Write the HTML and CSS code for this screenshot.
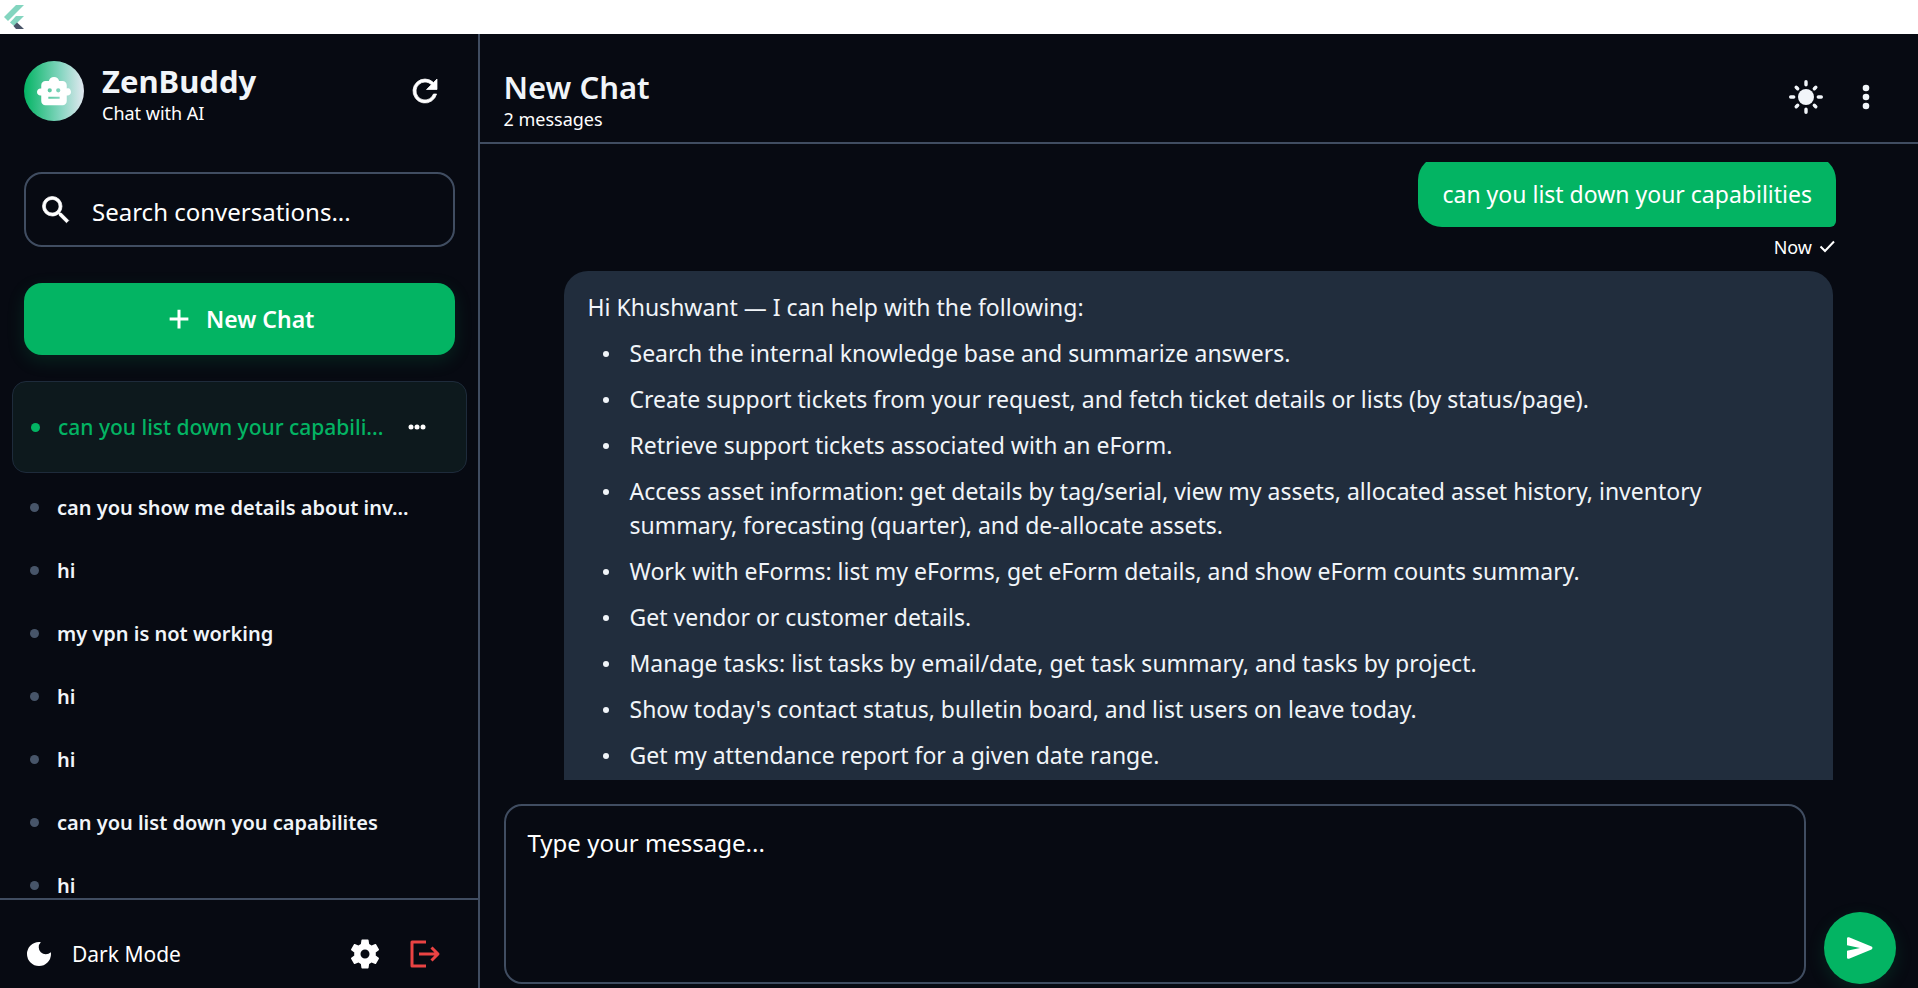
FILE: index.html
```
<!DOCTYPE html>
<html lang="en">
<head>
  <meta charset="UTF-8">
  <title>ZenBuddy</title>
  <link rel="stylesheet" href="styles.css">
</head>
<body>

  <div class="title-bar">
    <svg class="flutter-logo" viewBox="0 0 20 24">
      <path fill="#83d5bf" d="M12 0h8L4 16 0 12z"/>
      <path fill="#83d5bf" d="M12 11h8l-7 7-3 3-4-3.500z"/>
      <path fill="#4a5568" d="M9.500 21l3.500-3.500L20 24h-8z"/>
    </svg>
  </div>

  <div class="app">

    <aside class="sidebar">
      <div class="brand">
        <div class="avatar">
          <svg viewBox="0 1 24 24"><path fill="#fff" fill-rule="evenodd" d="M22 11c-.3 0-.7 0-1 .2V9c0-1.700-1.300-3-3-3h-2.400a3.700 3.700 0 0 0-7.200 0H6C4.300 6 3 7.300 3 9v2.200C1.400 10.900 0 12 0 13.700s1.400 2.800 3 2.500V20c0 1.700 1.300 3 3 3h12c1.700 0 3-1.300 3-3v-3.800c1.600.3 3-.8 3-2.500 0-1.400-.8-2.700-2-2.700zM7.500 12.500a1.500 1.500 0 1 1 3 0 1.500 1.500 0 0 1-3 0zm6 0a1.500 1.500 0 1 1 3 0 1.500 1.500 0 0 1-3 0zM8 17h8v1.500H8z"/></svg>
        </div>
        <div class="brand-text">
          <h1>ZenBuddy</h1>
          <p>Chat with AI</p>
        </div>
        <button class="icon-btn" aria-label="Refresh">
          <svg width="36" height="36" viewBox="0 0 24 24"><path fill="#fff" stroke="#fff" stroke-width=".5" d="M17.650 6.350A7.960 7.960 0 0 0 12 4a8 8 0 1 0 7.730 10h-2.080A6 6 0 1 1 12 6c1.660 0 3.140.69 4.220 1.780L13 11h7V4z"/></svg>
        </button>
      </div>

      <div class="search-box">
        <svg width="36" height="36" viewBox="0 0 24 24"><path fill="#fff" stroke="#fff" stroke-width=".5" d="M15.500 14h-.79l-.28-.27A6.471 6.471 0 0 0 16 9.500 6.500 6.500 0 1 0 9.500 16c1.610 0 3.090-.59 4.230-1.570l.27.28v.79l5 4.990L20.490 19l-4.990-5zm-6 0C7.010 14 5 11.990 5 9.500S7.010 5 9.500 5 14 7.010 14 9.500 11.990 14 9.500 14z"/></svg>
        <input type="text" id="searchInput" aria-label="Search conversations" placeholder="Search conversations...">
      </div>

      <button class="new-chat-btn">
        <svg width="30" height="30" viewBox="0 0 24 24"><path fill="#fff" d="M19.500 13.200h-6.300v6.300h-2.400v-6.300H4.500v-2.400h6.300V4.500h2.400v6.300h6.300z"/></svg>
        New Chat
      </button>

      <ul class="chat-list">
        <li class="chat-item active">
          <span class="dot"></span>
          <a href="#">can you list down your capabili...</a>
          <button class="more-btn" aria-label="Chat options">
            <svg width="18" height="6" viewBox="0 0 18 6" fill="#fff"><circle cx="3" cy="3" r="2.500"/><circle cx="9" cy="3" r="2.500"/><circle cx="15" cy="3" r="2.500"/></svg>
          </button>
        </li>
        <li class="chat-item"><span class="dot"></span><a href="#">can you show me details about inv...</a></li>
        <li class="chat-item"><span class="dot"></span><a href="#">hi</a></li>
        <li class="chat-item"><span class="dot"></span><a href="#">my vpn is not working</a></li>
        <li class="chat-item"><span class="dot"></span><a href="#">hi</a></li>
        <li class="chat-item"><span class="dot"></span><a href="#">hi</a></li>
        <li class="chat-item"><span class="dot"></span><a href="#">can you list down you capabilites</a></li>
        <li class="chat-item"><span class="dot"></span><a href="#">hi</a></li>
      </ul>

      <div class="sidebar-footer">
        <button class="mode-btn">
          <svg width="30" height="30" viewBox="0 0 30 30"><path fill="#fff" d="M15 3a12 12 0 1 0 12 12c0-.8-.1-1.300-.2-1.800a6.700 6.700 0 0 1-10-10C16.300 3.100 15.600 3 15 3z"/></svg>
          Dark Mode
        </button>
        <button class="icon-btn" aria-label="Settings">
          <svg width="36" height="36" viewBox="0 0 24 24"><path fill="#fff" d="M19.140 12.940c.04-.3.060-.61.060-.94 0-.32-.02-.64-.07-.94l2.030-1.580a.49.49 0 0 0 .12-.61l-1.920-3.320a.488.488 0 0 0-.59-.22l-2.390.96c-.5-.38-1.030-.7-1.620-.94l-.36-2.540a.484.484 0 0 0-.48-.41h-3.840c-.24 0-.43.17-.47.41l-.36 2.540c-.59.24-1.130.57-1.620.94l-2.390-.96c-.22-.08-.47 0-.59.22L2.740 8.870c-.12.21-.08.47.12.61l2.030 1.580c-.05.3-.09.63-.09.94s.02.64.07.94l-2.030 1.580a.49.49 0 0 0-.12.61l1.920 3.320c.12.22.37.29.59.22l2.390-.96c.5.38 1.030.7 1.620.94l.36 2.540c.05.24.24.41.48.41h3.840c.24 0 .44-.17.47-.41l.36-2.540c.59-.24 1.130-.56 1.620-.94l2.390.96c.22.08.47 0 .59-.22l1.920-3.320c.12-.22.07-.47-.12-.61zM12 15a3 3 0 1 1 0-6 3 3 0 0 1 0 6z"/></svg>
        </button>
        <button class="icon-btn" aria-label="Log out">
          <svg width="36" height="36" viewBox="0 0 36 36" fill="none" stroke="#ea4343" stroke-width="3" stroke-linejoin="round"><path d="M19 6H5v24h14M12 18h19M24.500 11.500L31 18l-6.500 6.500"/></svg>
        </button>
      </div>
    </aside>

    <main class="chat">
      <header class="chat-header">
        <div class="chat-title">
          <h2>New Chat</h2>
          <p>2 messages</p>
        </div>
        <button class="icon-btn" aria-label="Light mode">
          <svg width="36" height="36" viewBox="0 0 36 36"><circle cx="18" cy="18" r="8" fill="#f1f5f9"/><path stroke="#f1f5f9" stroke-width="3.400" stroke-linecap="round" d="M18 2.700v3M18 30.300v3M2.700 18h3M30.300 18h3M8.200 8.200l1.500 1.500M26.300 26.300l1.500 1.500M8.200 27.800l1.500-1.500M26.300 9.700l1.500-1.500"/></svg>
        </button>
        <button class="icon-btn" aria-label="Menu">
          <svg width="36" height="36" viewBox="0 0 36 36" fill="#f1f5f9"><circle cx="18" cy="9" r="3.300"/><circle cx="18" cy="18" r="3.300"/><circle cx="18" cy="27" r="3.300"/></svg>
        </button>
      </header>

      <div class="messages">
        <div class="bubble user">can you list down your capabilities</div>
        <div class="meta">
          Now
          <svg width="18" height="18" viewBox="0 0 18 18"><path fill="none" stroke="#fff" stroke-width="2" d="M2.500 8.500l4.500 4.500 9-9.500"/></svg>
        </div>
        <div class="bubble bot">
          <p>Hi Khushwant — I can help with the following:</p>
          <ul>
            <li>Search the internal knowledge base and summarize answers.</li>
            <li>Create support tickets from your request, and fetch ticket details or lists (by status/page).</li>
            <li>Retrieve support tickets associated with an eForm.</li>
            <li>Access asset information: get details by tag/serial, view my assets, allocated asset history, inventory summary, forecasting (quarter), and de-allocate assets.</li>
            <li>Work with eForms: list my eForms, get eForm details, and show eForm counts summary.</li>
            <li>Get vendor or customer details.</li>
            <li>Manage tasks: list tasks by email/date, get task summary, and tasks by project.</li>
            <li>Show today's contact status, bulletin board, and list users on leave today.</li>
            <li>Get my attendance report for a given date range.</li>
          </ul>
        </div>
      </div>

      <form class="composer">
        <textarea aria-label="Message" placeholder="Type your message..."></textarea>
        <button type="button" class="send-btn" aria-label="Send">
          <svg width="26" height="22" viewBox="0 0 26 22"><path fill="#fff" d="M0 1.500C0 .4 1 0 2 .3l22.500 9.300c1.300.6 1.300 2.200 0 2.800L2 21.700c-1 .3-2-.1-2-1.200v-6.700L13 11 0 8.200z"/></svg>
        </button>
      </form>
    </main>

  </div>

</body>
</html>
```
FILE: styles.css
```
:root {
  --bg: #070a12;
  --green: #03b463;
  --line: #404d61;
  --dot: #475569;
  --text: #f1f5f9;
  --bubble: #212d3d;
}

* {
  box-sizing: border-box;
}

body {
  margin: 0;
  height: 100vh;
  display: flex;
  flex-direction: column;
  overflow: hidden;
  background: var(--bg);
  color: var(--text);
  font-family: "Noto Sans", "Open Sans", sans-serif;
  font-size: 23px;
}

h1, h2, p, ul {
  margin: 0;
  padding: 0;
}

ul {
  list-style: none;
}

button {
  border: none;
  background: none;
  color: inherit;
  font: inherit;
  padding: 0;
  cursor: pointer;
}

svg {
  display: block;
}

input, textarea {
  background: none;
  border: none;
  outline: none;
  color: var(--text);
  font: inherit;
  font-size: 24px;
}

::placeholder {
  color: #fff;
  opacity: 1;
}

.title-bar {
  flex: none;
  height: 34px;
  padding: 5px 4px;
  background: #fff;
}

.flutter-logo {
  width: 20px;
  height: 24px;
}

.app {
  flex: 1;
  min-height: 0;
  display: flex;
}

/* sidebar */

.sidebar {
  width: 25%;
  min-width: 320px;
  display: flex;
  flex-direction: column;
  border-right: 2px solid var(--line);
}

.brand {
  display: flex;
  align-items: center;
  gap: 18px;
  padding: 27px 35px 27px 24px;
  height: 114px;
}

.avatar {
  width: 60px;
  height: 60px;
  border-radius: 50%;
  background: linear-gradient(90deg, #03b463, #83d5bf 60%, #e2e8f0);
  display: flex;
  align-items: center;
  justify-content: center;
}

.avatar svg {
  width: 34px;
  height: 34px;
}

.brand-text {
  flex: 1;
  padding-top: 4px;
}

.brand-text h1 {
  font-size: 31px;
  line-height: 40px;
}

.brand-text p,
.chat-title p,
.meta {
  color: #fff;
  font-size: 18px;
  line-height: 24px;
}

.search-box {
  display: flex;
  align-items: center;
  gap: 18px;
  height: 75px;
  margin: 24px 23px 0 24px;
  padding: 0 12px;
  border: 2px solid var(--line);
  border-radius: 18px;
}

.search-box input {
  flex: 1;
  min-width: 0;
  padding: 4px 0 0;
}

.new-chat-btn {
  flex: none;
  display: flex;
  align-items: center;
  justify-content: center;
  gap: 12px;
  height: 72px;
  margin: 36px 23px 0 24px;
  border-radius: 18px;
  background: var(--green);
  color: #fff;
  font-weight: 600;
  box-shadow: 0 6px 18px rgba(3, 180, 99, 0.15);
}

.chat-list {
  flex: 1;
  min-height: 0;
  overflow: hidden;
  padding: 26px 11px 0 12px;
}

.chat-item {
  display: flex;
  align-items: center;
  gap: 18px;
  height: 63px;
  padding: 0 40px 0 18px;
}

.chat-item a {
  flex: 1;
  color: inherit;
  font-size: 20px;
  font-weight: 600;
  text-decoration: none;
  white-space: nowrap;
}

.dot {
  width: 9px;
  height: 9px;
  border-radius: 50%;
  background: var(--dot);
}

.chat-item.active {
  height: 92px;
  margin-bottom: 3px;
  border: 1px solid #1e2b3b;
  border-radius: 14px;
  background: #0d191d;
  color: var(--green);
}

.chat-item.active a {
  font-size: 21px;
  font-weight: 500;
}

.chat-item.active .dot {
  background: var(--green);
}

.sidebar-footer {
  display: flex;
  align-items: center;
  gap: 24px;
  height: 90px;
  padding: 20px 35px 0 24px;
  border-top: 2px solid var(--line);
}

.mode-btn {
  flex: 1;
  display: flex;
  align-items: center;
  gap: 18px;
  color: #fff;
  font-size: 21px;
}

/* chat */

.chat {
  flex: 1;
  min-width: 0;
  display: flex;
  flex-direction: column;
}

.chat-header {
  display: flex;
  align-items: center;
  gap: 24px;
  height: 110px;
  padding: 18px 34px 0 24px;
  border-bottom: 2px solid var(--line);
}

.chat-title {
  flex: 1;
  padding-top: 4px;
}

.chat-title h2 {
  font-size: 31px;
  font-weight: 600;
  line-height: 40px;
}

.messages {
  flex: 1;
  min-height: 0;
  display: flex;
  flex-direction: column;
  overflow: hidden;
  margin-top: 18px;
  padding: 0 82px 0 84px;
}

.bubble {
  border-radius: 24px;
  line-height: 34px;
}

.bubble.user {
  align-self: flex-end;
  margin-top: -6px;
  padding: 21px 24px 16px;
  border-bottom-right-radius: 6px;
  background: var(--green);
  color: #fff;
}

.meta {
  display: flex;
  align-items: center;
  align-self: flex-end;
  gap: 6px;
  margin: 8px 0 12px;
}

.bubble.bot {
  flex: none;
  margin-right: 3px;
  padding: 19px 24px 48px;
  background: var(--bubble);
}

.bubble.bot li {
  position: relative;
  margin-top: 12px;
  padding: 0 24px 0 42px;
}

.bubble.bot li::before {
  content: "";
  position: absolute;
  left: 15px;
  top: 15px;
  width: 6px;
  height: 6px;
  border-radius: 50%;
  background: var(--text);
}

.composer {
  display: flex;
  align-items: flex-end;
  gap: 18px;
  padding: 24px 22px 4px 24px;
}

.composer textarea {
  flex: 1;
  height: 180px;
  padding: 20px 22px;
  border: 2px solid var(--line);
  border-radius: 18px;
  resize: none;
}

.send-btn {
  display: flex;
  align-items: center;
  justify-content: center;
  width: 72px;
  height: 72px;
  border-radius: 50%;
  background: var(--green);
  box-shadow: 0 6px 18px rgba(3, 180, 99, 0.15);
}
```
